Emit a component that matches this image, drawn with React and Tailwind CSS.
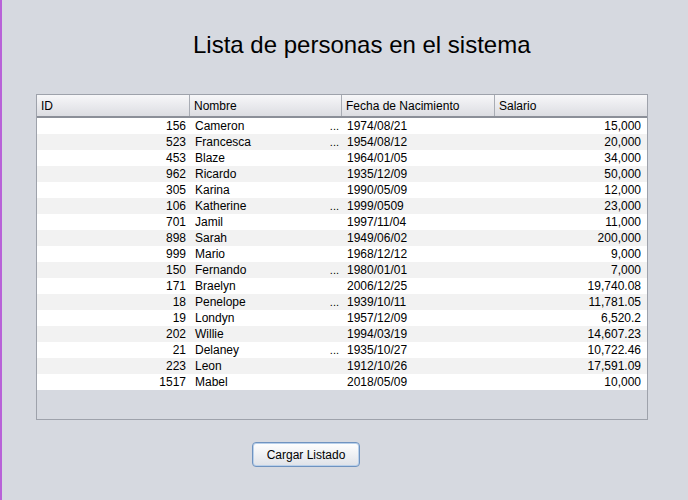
import React from "react";

const rows = [
  ["156", "Cameron", true, "1974/08/21", "15,000"],
  ["523", "Francesca", true, "1954/08/12", "20,000"],
  ["453", "Blaze", false, "1964/01/05", "34,000"],
  ["962", "Ricardo", false, "1935/12/09", "50,000"],
  ["305", "Karina", false, "1990/05/09", "12,000"],
  ["106", "Katherine", true, "1999/0509", "23,000"],
  ["701", "Jamil", false, "1997/11/04", "11,000"],
  ["898", "Sarah", false, "1949/06/02", "200,000"],
  ["999", "Mario", false, "1968/12/12", "9,000"],
  ["150", "Fernando", true, "1980/01/01", "7,000"],
  ["171", "Braelyn", false, "2006/12/25", "19,740.08"],
  ["18", "Penelope", true, "1939/10/11", "11,781.05"],
  ["19", "Londyn", false, "1957/12/09", "6,520.2"],
  ["202", "Willie", false, "1994/03/19", "14,607.23"],
  ["21", "Delaney", true, "1935/10/27", "10,722.46"],
  ["223", "Leon", false, "1912/10/26", "17,591.09"],
  ["1517", "Mabel", false, "2018/05/09", "10,000"],
];

const cols = "grid grid-cols-[153px_152px_153px_152px]";

export default function App() {
  return (
    <div className="w-[688px] h-[500px] bg-[#d6d9e0] border-l-2 border-[#b862d8] font-['Liberation_Sans',Arial,sans-serif] text-[12px] text-black flex flex-col">
      {/* Title */}
      <div className="h-[94px] pl-[191px] pt-[31px]">
        <h1 className="text-[24px] leading-[28px] font-normal">Lista de personas en el sistema</h1>
      </div>

      {/* Table */}
      <div className="ml-[34px] w-[612px] h-[326px] border border-[#9ea2ab] bg-[#d6d9e0] flex flex-col overflow-hidden">
        <div className={`${cols} h-[23px] border-b-2 border-[#8b8f98] bg-gradient-to-b from-[#f7f7f9] to-[#dcdde2]`}>
          {["ID", "Nombre", "Fecha de Nacimiento", "Salario"].map((h, i) => (
            <div
              key={h}
              className={`pl-[4px] flex items-center leading-none ${i < 3 ? "border-r border-[#a8acb4]" : ""}`}
            >
              {h}
            </div>
          ))}
        </div>
        {rows.map(([id, name, dots, date, sal], i) => (
          <div key={id} className={`${cols} h-[16px] leading-[16px] ${i % 2 ? "bg-[#f2f2f2]" : "bg-white"}`}>
            <div className="text-right pr-[4px]">{id}</div>
            <div className="pl-[5px] pr-[3px] flex justify-between">
              <span>{name}</span>
              {dots && <span className="text-[11px]">...</span>}
            </div>
            <div className="pl-[5px]">{date}</div>
            <div className="text-right pr-[6px]">{sal}</div>
          </div>
        ))}
      </div>

      {/* Button */}
      <div className="pl-[250px] pt-[22px]">
        <button className="w-[108px] h-[25px] rounded-[4px] border border-[#6f93c0] shadow-[inset_0_0_0_1px_#b9d0ea] bg-gradient-to-b from-white to-[#dfe2e8] text-[12px] leading-none">
          Cargar Listado
        </button>
      </div>
    </div>
  );
}
